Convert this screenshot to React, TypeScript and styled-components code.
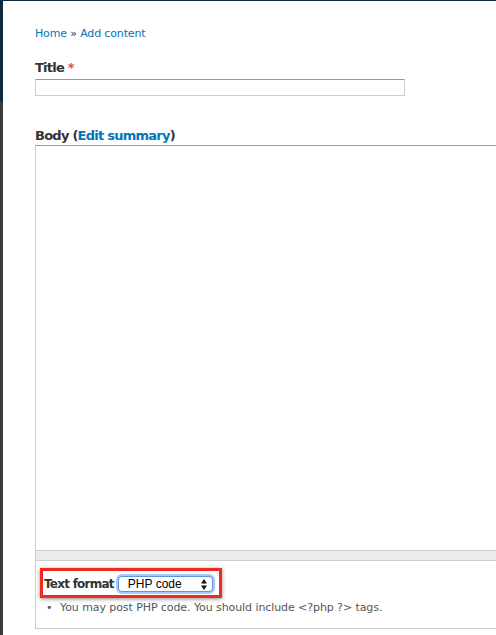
import React from 'react'
import styled, { createGlobalStyle } from 'styled-components'

const GlobalStyle = createGlobalStyle`
  html,
  body {
    margin: 0;
    padding: 0;
    background: #fff;
    overflow: hidden;
  }

  body {
    font-family: 'Lucida Grande', 'DejaVu Sans', 'Noto Sans', sans-serif;
    color: #333;
  }
`

const Frame = styled.div`
  display: flex;
  height: 635px;
  border-top: 1px solid #0e2a3e;
  box-sizing: border-box;
`

const Rail = styled.div`
  flex: none;
  width: 3px;
  background: linear-gradient(to bottom, #0e2a3e 0, #0e2a3e 101px, #3b3b3b 101px);
`

const Page = styled.main`
  flex: 1;
  min-width: 0;
  overflow: hidden;
  padding: 26px 0 0 32px;
`

const Breadcrumb = styled.nav`
  font-size: 11px;
  line-height: 14px;
  letter-spacing: -0.15px;
  color: #333;
  margin-bottom: 18px;
`

const Link = styled.a`
  color: #0074bd;
  text-decoration: none;
`

const Label = styled.label<{ $size?: number }>`
  display: block;
  padding-top: 1px;
  font-weight: 700;
  font-size: ${({ $size }) => $size ?? 13}px;
  line-height: 16px;
  letter-spacing: -0.75px;
  color: #333;
`

const Required = styled.span`
  color: #e0455a;
`

const TextInput = styled.input`
  display: block;
  box-sizing: border-box;
  width: 370px;
  height: 17px;
  margin: 3px 0 31px;
  border: 1px solid #ccc;
  border-top-color: #999;
  padding: 0 3px;
  background: #fff;
`

const BodyLabel = styled(Label)`
  margin-bottom: 1px;
`

const TextArea = styled.textarea`
  display: block;
  box-sizing: border-box;
  width: 480px;
  height: 405px;
  margin: 0;
  border: 1px solid #ccc;
  border-top-color: #999;
  border-bottom: 0;
  resize: none;
  background: #fff;
`

const Grippie = styled.div`
  box-sizing: border-box;
  width: 480px;
  height: 11px;
  background: #ececec;
  border: 1px solid #ccc;
`

const FilterWrapper = styled.div`
  box-sizing: border-box;
  width: 480px;
  height: 68px;
  border: 1px solid #ccc;
  border-top: 0;
  border-right: 0;
  padding: 7px 0 0 4px;
`

const Highlight = styled.div`
  display: inline-flex;
  align-items: center;
  gap: 4px;
  box-sizing: border-box;
  height: 30px;
  padding: 2px 6px 0 1px;
  border: 3px solid #ee2a21;
  box-shadow: 0 1px 4px rgba(0, 0, 0, 0.45);

  ${Label} {
    padding-top: 0;
  }
`

const Select = styled.div`
  display: flex;
  align-items: center;
  justify-content: space-between;
  box-sizing: border-box;
  width: 95px;
  height: 16px;
  padding: 0 5px 0 9px;
  border: 1px solid #5e93dd;
  border-radius: 4px;
  box-shadow: 0 0 0 2px #a9c8f5;
  background: #fff;
  font-family: 'Liberation Sans', Arial, sans-serif;
  font-size: 12px;
  color: #000;
`

const Tips = styled.ul`
  list-style: none;
  margin: 3px 0 0;
  padding: 0 0 0 6px;
`

const Tip = styled.li`
  display: flex;
  gap: 9px;
  font-size: 11px;
  line-height: 14px;
  letter-spacing: -0.08px;
  color: #555;
`

const Bullet = styled.span`
  width: 5px;
  color: #555;
`

const Arrows = () => (
  <svg width='6' height='11' viewBox='0 0 6 11' aria-hidden='true'>
    <polygon points='0,4.5 3,0 6,4.5' fill='#111' />
    <polygon points='0,6.5 3,11 6,6.5' fill='#111' />
  </svg>
)

export default function App() {
  return (
    <>
      <GlobalStyle />
      <Frame>
        <Rail />
        <Page>
          <Breadcrumb>
            <Link href='#'>Home</Link> » <Link href='#'>Add content</Link>
          </Breadcrumb>

          <Label htmlFor='edit-title'>
            Title <Required>*</Required>
          </Label>
          <TextInput id='edit-title' type='text' />

          <BodyLabel htmlFor='edit-body'>
            Body (<Link href='#'>Edit summary</Link>)
          </BodyLabel>
          <TextArea id='edit-body' />
          <Grippie />

          <FilterWrapper>
            <Highlight>
              <Label $size={12} as='span'>
                Text format
              </Label>
              <Select>
                <span>PHP code</span>
                <Arrows />
              </Select>
            </Highlight>
            <Tips>
              <Tip>
                <Bullet>•</Bullet>
                You may post PHP code. You should include &lt;?php ?&gt; tags.
              </Tip>
            </Tips>
          </FilterWrapper>
        </Page>
      </Frame>
    </>
  )
}
